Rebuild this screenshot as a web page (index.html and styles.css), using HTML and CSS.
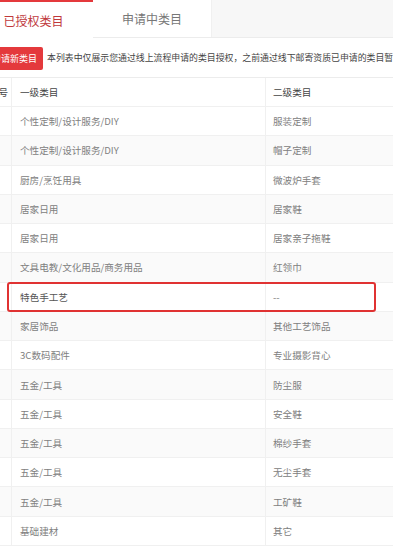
FILE: index.html
```html
<!DOCTYPE html>
<html lang="zh">
<head>
<meta charset="utf-8">
<link rel="stylesheet" href="styles.css">
</head>
<body>
<div class="page">
  <div class="tabs">
    <div class="tab active">已授权类目</div>
    <div class="tab">申请中类目</div>
    <div class="tab-fill"></div>
  </div>
  <div class="content">
    <div class="notice">
      <button class="btn">申请新类目</button>
      <span class="notice-text">本列表中仅展示您通过线上流程申请的类目授权，之前通过线下邮寄资质已申请的类目暂不在此展示</span>
    </div>
    <div class="table">
      <div class="row head"><div class="c1">序号</div><div class="c2">一级类目</div><div class="c3">二级类目</div></div>
      <div class="row"><div class="c1">1</div><div class="c2">个性定制/设计服务/DIY</div><div class="c3">服装定制</div></div>
      <div class="row alt"><div class="c1">2</div><div class="c2">个性定制/设计服务/DIY</div><div class="c3">帽子定制</div></div>
      <div class="row"><div class="c1">3</div><div class="c2">厨房/烹饪用具</div><div class="c3">微波炉手套</div></div>
      <div class="row alt"><div class="c1">4</div><div class="c2">居家日用</div><div class="c3">居家鞋</div></div>
      <div class="row"><div class="c1">5</div><div class="c2">居家日用</div><div class="c3">居家亲子拖鞋</div></div>
      <div class="row alt"><div class="c1">6</div><div class="c2">文具电教/文化用品/商务用品</div><div class="c3">红领巾</div></div>
      <div class="row marked"><div class="c1">7</div><div class="c2">特色手工艺</div><div class="c3">--</div></div>
      <div class="row alt"><div class="c1">8</div><div class="c2">家居饰品</div><div class="c3">其他工艺饰品</div></div>
      <div class="row"><div class="c1">9</div><div class="c2">3C数码配件</div><div class="c3">专业摄影背心</div></div>
      <div class="row alt"><div class="c1">10</div><div class="c2">五金/工具</div><div class="c3">防尘服</div></div>
      <div class="row"><div class="c1">11</div><div class="c2">五金/工具</div><div class="c3">安全鞋</div></div>
      <div class="row alt"><div class="c1">12</div><div class="c2">五金/工具</div><div class="c3">棉纱手套</div></div>
      <div class="row"><div class="c1">13</div><div class="c2">五金/工具</div><div class="c3">无尘手套</div></div>
      <div class="row alt"><div class="c1">14</div><div class="c2">五金/工具</div><div class="c3">工矿鞋</div></div>
      <div class="row"><div class="c1">15</div><div class="c2">基础建材</div><div class="c3">其它</div></div>
    </div>
  </div>
</div>
</body>
</html>
```

FILE: styles.css
```css
* { box-sizing: border-box; }
html, body { margin: 0; padding: 0; background: #fff; overflow: hidden; }
body {
  font-family: "Microsoft YaHei", "Noto Sans CJK SC", sans-serif;
  color: #333;
  width: 393px;
  height: 550px;
}
.page {
  margin-left: -26px;
  width: 600px;
}
.tabs {
  display: flex;
  height: 38px;
  background: #f7f7f7;
  border-bottom: 1px solid #ececec;
}
.tab {
  width: 119px;
  display: flex;
  align-items: center;
  justify-content: center;
  font-size: 12px;
  color: #777;
  background: #fff;
  border-right: 1px solid #f0f0f0;
}
.tab.active {
  color: #c0393c;
  border-top: 2px solid #e4393c;
  height: 39px;
  padding-bottom: 1px;
  border-right: none;
}
.tab-fill { flex: 1; }
.content {
  padding-left: 12px;
}
.notice {
  display: flex;
  align-items: center;
  height: 39px;
  padding-top: 1px;
  gap: 4px;
}
.btn {
  height: 23px;
  border: none;
  border-radius: 2px;
  background: #e4393c;
  color: #fff;
  font-family: inherit;
  font-size: 9px;
  padding: 0 6px;
  line-height: 23px;
}
.notice-text {
  font-size: 8.9px;
  color: #444;
  white-space: nowrap;
  margin-top: -2px;
}
.table {
  border-top: 1px solid #ececec;
}
.row {
  display: flex;
  height: 29.27px;
  border-bottom: 1px solid #f0f0f0;
  font-size: 9.6px;
  color: #808080;
  align-items: stretch;
  position: relative;
}
.row.alt { background: #fafafa; }
.row.head { height: 29px; color: #444; background: #fff; }
.row > div { display: flex; align-items: center; }
.c1 { width: 26px; justify-content: center; border-right: 1px solid #f0f0f0; color: #444; }
.row:not(.head) .c1 { color: transparent; }
.c2 { width: 254px; padding-left: 8px; border-right: 1px solid #f0f0f0; }
.c3 { flex: 1; padding-left: 7px; }
.row.marked { background: #fff; }
.row.marked .c2 { color: #555; }
.row.marked::after {
  content: "";
  position: absolute;
  left: 21px;
  width: 365px;
  top: -1px;
  bottom: -1px;
  border: 2px solid #e03232;
  border-radius: 3px;
}
```
